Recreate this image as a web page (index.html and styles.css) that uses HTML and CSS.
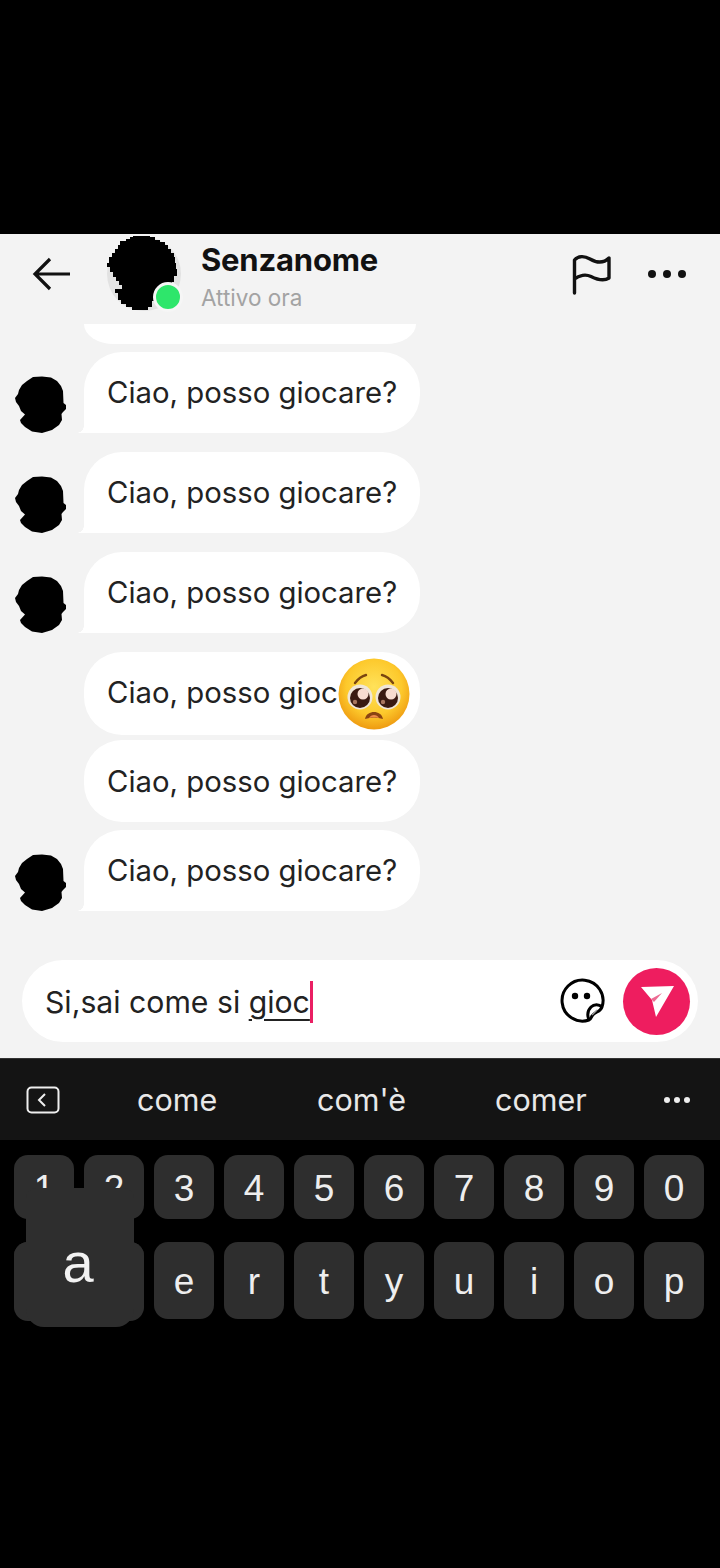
FILE: index.html
```html
<!DOCTYPE html>
<html lang="it">
<head>
<meta charset="utf-8">
<title>Senzanome</title>
<link rel="stylesheet" href="styles.css">
</head>
<body>
<main class="screen">
  <section class="chat">
    <header class="topbar">
      <svg class="back" viewBox="0 0 40 34" width="40" height="34"><path d="M38 17H3M18 2 3 17l15 15" fill="none" stroke="#111" stroke-width="3.2"/></svg>
      <div class="peer">
        <svg class="peer-pic" viewBox="0 0 76 76" width="76" height="76">
          <circle cx="38" cy="38" r="37" fill="#e2e2e2"/>
          <path d="M24 1H27V0H44V1H49V4H54V6H59V9H62V13H65V17H68V21H69V27H70V33H71V40H68V46H66V52H62V60H56V65H46V71H42V74H26V71H20V68H15V64H12V57H9V53H16V49H13V45H10V41H7V36H4V31H1V27H3V21H6V17H9V13H12V9H14V5H20V3H24Z" fill="#000"/>
        </svg>
        <span class="presence"></span>
      </div>
      <div class="peer-text">
        <div class="peer-name">Senzanome</div>
        <div class="peer-status">Attivo ora</div>
      </div>
      <svg class="flag" viewBox="0 0 42 42" width="42" height="42"><path d="M3.500 39V6C7 2 13 1.500 19 5s13 5 19-1v20c-6 4-13 1-18-1.500S8 21 3.500 25" fill="none" stroke="#111" stroke-width="3.4" stroke-linejoin="round" stroke-linecap="round"/></svg>
      <div class="more"><i></i><i></i><i></i></div>
    </header>

    <div class="thread">
      <div class="row"><div class="bubble clipped"></div></div>
      <div class="row gap-s">
        <svg class="face" viewBox="0 0 54 58"><path d="M19 1L28 .5 37 1.500 43 5 47 10 49 15 49.500 27 52 29V33L49 36 47.500 38 48 44 45 49 38 54 28 57 18 55.500 11 51 7 47 6 44 11 38.500 7 35 5 30 2 26 1 22 4 18 5 14 8 9 13 5Z" fill="#000"/></svg>
        <div class="bubble tail">Ciao, posso giocare?</div>
      </div>
      <div class="row gap-l">
        <svg class="face" viewBox="0 0 54 58"><path d="M19 1L28 .5 37 1.500 43 5 47 10 49 15 49.500 27 52 29V33L49 36 47.500 38 48 44 45 49 38 54 28 57 18 55.500 11 51 7 47 6 44 11 38.500 7 35 5 30 2 26 1 22 4 18 5 14 8 9 13 5Z" fill="#000"/></svg>
        <div class="bubble tail">Ciao, posso giocare?</div>
      </div>
      <div class="row gap-l">
        <svg class="face" viewBox="0 0 54 58"><path d="M19 1L28 .5 37 1.500 43 5 47 10 49 15 49.500 27 52 29V33L49 36 47.500 38 48 44 45 49 38 54 28 57 18 55.500 11 51 7 47 6 44 11 38.500 7 35 5 30 2 26 1 22 4 18 5 14 8 9 13 5Z" fill="#000"/></svg>
        <div class="bubble tail">Ciao, posso giocare?</div>
      </div>
      <div class="row gap-l">
        <div class="bubble tall">Ciao, posso gioc<span class="rest">are?</span>
          <svg class="emoji" viewBox="0 0 72 72" width="72" height="72">
            <defs>
              <radialGradient id="skin" cx="50%" cy="40%" r="60%">
                <stop offset="0" stop-color="#ffe25a"/>
                <stop offset=".65" stop-color="#fdc92c"/>
                <stop offset="1" stop-color="#ee9a10"/>
              </radialGradient>
            </defs>
            <circle cx="36" cy="36" r="35.500" fill="url(#skin)"/>
            <path d="M17 25c3-4 7-7 11-8M55 25c-3-4-7-7-11-8" fill="none" stroke="#7a4510" stroke-width="2.400" stroke-linecap="round"/>
            <circle cx="22" cy="39" r="12.500" fill="#f0e6d8"/>
            <circle cx="50" cy="39" r="12.500" fill="#f0e6d8"/>
            <circle cx="22" cy="40" r="10" fill="#3a1a12"/>
            <circle cx="50" cy="40" r="10" fill="#3a1a12"/>
            <circle cx="25" cy="36" r="5.500" fill="#f7dcd0"/>
            <circle cx="53" cy="36" r="5.500" fill="#f7dcd0"/>
            <circle cx="17" cy="44" r="2.200" fill="#a9765f"/>
            <circle cx="45" cy="44" r="2.200" fill="#a9765f"/>
            <path d="M27 61c1-5 5-7 9-7s8 2 9 7c-6-2-12-2-18 0z" fill="#8a4412"/>
            <path d="M31 60c1-2 3-3 5-3s4 1 5 3c-3-1-7-1-10 0z" fill="#ef8a4a"/>
          </svg>
        </div>
      </div>
      <div class="row gap-xs"><div class="bubble roomy">Ciao, posso giocare?</div></div>
      <div class="row gap-s">
        <svg class="face" viewBox="0 0 54 58"><path d="M19 1L28 .5 37 1.500 43 5 47 10 49 15 49.500 27 52 29V33L49 36 47.500 38 48 44 45 49 38 54 28 57 18 55.500 11 51 7 47 6 44 11 38.500 7 35 5 30 2 26 1 22 4 18 5 14 8 9 13 5Z" fill="#000"/></svg>
        <div class="bubble tail">Ciao, posso giocare?</div>
      </div>
    </div>

    <div class="composer">
      <div class="draft">Si,sai come si <u>gioc</u><span class="caret"></span></div>
      <svg class="sticker" viewBox="0 0 46 46" width="46" height="46">
        <path d="M30 42a20.500 20.500 0 1 1 13-13c-1 3-3 4-5 5s-4 2-5 4-1 3-3 4z" fill="none" stroke="#000" stroke-width="3"/>
        <path d="M30 42c-2-5-1-10 2-13s8-3 11 0" fill="none" stroke="#000" stroke-width="3"/>
        <path d="M33 37l5-5" fill="none" stroke="#9a9a9a" stroke-width="1.500"/>
        <circle cx="16" cy="18" r="3.200" fill="#000"/>
        <circle cx="28" cy="18" r="3.200" fill="#000"/>
      </svg>
      <button class="send" type="button" aria-label="Invia">
        <svg viewBox="0 0 34 34" width="34" height="34"><path d="M1 3 34 2 16 33 12 16z" fill="#fff"/><path d="M11 15 22 9 14 18z" fill="#ec6b93"/></svg>
      </button>
    </div>
  </section>

  <section class="keyboard">
    <div class="suggest">
      <svg class="collapse" viewBox="0 0 34 28" width="34" height="28"><rect x="1.500" y="1.500" width="31" height="25" rx="4" fill="none" stroke="#eee" stroke-width="2"/><path d="M19 8l-6 6 6 6" fill="none" stroke="#eee" stroke-width="2"/></svg>
      <span class="word w1">come</span>
      <span class="word w2">com'è</span>
      <span class="word w3">comer</span>
      <div class="more light"><i></i><i></i><i></i></div>
    </div>
    <div class="keys">
      <div class="keyrow nums">
        <span class="key">1</span><span class="key">2</span><span class="key">3</span><span class="key">4</span><span class="key">5</span><span class="key">6</span><span class="key">7</span><span class="key">8</span><span class="key">9</span><span class="key">0</span>
      </div>
      <div class="keyrow letters">
        <span class="key">q</span><span class="key">w</span><span class="key">e</span><span class="key">r</span><span class="key">t</span><span class="key">y</span><span class="key">u</span><span class="key">i</span><span class="key">o</span><span class="key">p</span>
      </div>
      <div class="popup">
        <div class="pop-wide"></div>
        <div class="pop-tall">a</div>
      </div>
    </div>
  </section>
</main>
</body>
</html>
```

FILE: styles.css
```css
* { box-sizing: border-box; }
html, body { margin: 0; background: #000; }
.screen { width: 720px; height: 1568px; padding-top: 234px; background: #000; font-family: Inter, "Liberation Sans", sans-serif; overflow: hidden; }

.chat { height: 824px; background: #f3f3f3; display: flex; flex-direction: column; }

.topbar { height: 90px; flex: none; display: flex; align-items: center; padding: 0 0 11px 32px; }
.back { flex: none; margin-right: 34px; }
.peer { position: relative; width: 76px; height: 76px; flex: none; margin-right: 18px; align-self: flex-start; margin-top: 2px; }
.peer-pic { display: block; }
.presence { position: absolute; right: -1px; bottom: 0; width: 30px; height: 30px; border-radius: 50%; background: #2ee66b; border: 3px solid #f6f6f6; }
.peer-text { flex: 1; align-self: flex-start; padding-left: 1px; }
.peer-name { font-size: 31px; line-height: 36px; font-weight: 700; color: #111; margin-top: 8px; letter-spacing: -.2px; }
.peer-status { font-size: 22.500px; line-height: 26px; color: #a3a3a3; margin-top: 7px; }
.flag { flex: none; margin: 3px 35px 0 0; }
.more { display: flex; gap: 7px; flex: none; margin-right: 34px; }
.more i { width: 8px; height: 8px; border-radius: 50%; background: #111; }
.more.light { gap: 4px; margin: 0; position: absolute; left: 664px; top: 38px; }
.more.light i { width: 6px; height: 6px; background: #eee; }

.thread { flex: 1; overflow: hidden; padding-left: 14px; }
.row { display: flex; align-items: flex-end; position: relative; padding-left: 70px; }
.gap-xs { margin-top: 5px; }
.gap-s { margin-top: 8px; }
.gap-l { margin-top: 19px; }
.face { position: absolute; left: 0; bottom: -1px; width: 54px; height: 58px; }
.bubble { position: relative; width: 336px; height: 81px; background: #fff; border-radius: 38px; padding-left: 23px; font-size: 29.300px; line-height: 82px; color: #222; white-space: nowrap; }
.bubble.tall { height: 83px; }
.bubble.roomy { height: 82px; line-height: 83px; }
.bubble.clipped { height: 20px; border-radius: 0 0 30px 30px / 0 0 20px 20px; width: 332px; }
.bubble.tail { border-bottom-left-radius: 0; }
.bubble.tail::before { content: ""; position: absolute; left: -7px; bottom: 0; width: 7px; height: 7px; background: radial-gradient(circle at 0 0, transparent 6.500px, #fff 7px); }
.rest { visibility: hidden; }
.emoji { position: absolute; left: 254px; top: 6px; }

.composer { flex: none; margin: 0 22px 16px; height: 82px; background: #fff; border-radius: 41px; display: flex; align-items: center; padding: 0 8px 0 23px; width: 676px; }
.draft { flex: 1; font-size: 30.200px; line-height: 40px; color: #222; display: flex; align-items: center; white-space: pre; padding-top: 1px; }
.draft u { text-underline-offset: 6px; text-decoration-thickness: 2px; }
.caret { width: 3px; height: 42px; background: #ea1f63; }
.sticker { flex: none; margin: 0 18px 0 -1px; }
.send { flex: none; width: 67px; height: 67px; border: 0; padding: 0 0 0 1px; border-radius: 50%; background: #ee1d5f; display: flex; align-items: center; justify-content: center; }

.keyboard { position: relative; }
.suggest { height: 82px; background: #141414; border-top: 1px solid #333; position: relative; display: flex; align-items: center; color: #e8e8e8; font-size: 30.500px; }
.collapse { position: absolute; left: 26px; top: 27px; }
.word { position: absolute; top: 23px; line-height: 36px; }
.w1 { left: 137px; }
.w2 { left: 317px; }
.w3 { left: 495px; }

.keys { position: relative; padding: 15px 14px 0; display: flex; flex-direction: column; gap: 23px; }
.keyrow { display: flex; gap: 10px; }
.key { width: 60px; background: #2e2e2e; border-radius: 14px; color: #eee; display: flex; align-items: center; justify-content: center; font-family: "Liberation Sans", Inter, sans-serif; }
.nums .key { height: 64px; font-size: 37px; padding-top: 4px; }
.letters .key { height: 77px; font-size: 37px; padding-top: 2px; }
.popup { position: absolute; left: 14px; top: 48px; width: 130px; height: 139px; }
.pop-wide { position: absolute; left: 0; top: 54px; width: 130px; height: 79px; background: #2e2e2e; border-radius: 14px; }
.pop-tall { position: absolute; left: 12px; top: 0; width: 108px; height: 139px; background: #2e2e2e; border-radius: 10px 10px 18px 18px; color: #f2f2f2; font-size: 56px; line-height: 150px; padding-right: 4px; text-align: center; font-family: "Liberation Sans", sans-serif; }
```
